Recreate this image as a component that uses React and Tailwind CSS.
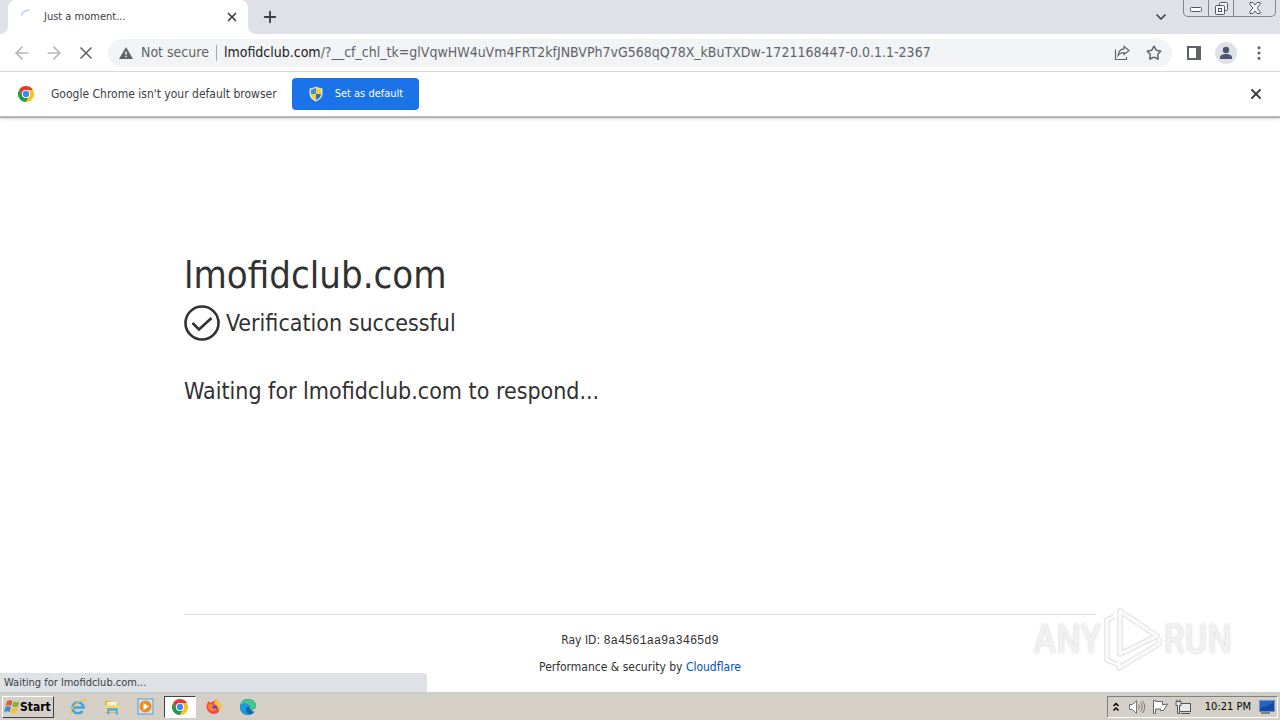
import React from 'react';
import { ArrowLeft, ArrowRight, ChevronDown, Plus, X, Star, MoreVertical } from 'lucide-react';

const ChromeLogo = ({ className }) => (
    <svg viewBox="0 0 48 48" className={className} aria-hidden="true">
        <path d="M24 0a24 24 0 0 1 20.8 12H24A12 12 0 0 0 13.6 30L3.2 12A24 24 0 0 1 24 0z" fill="#e33b2e" />
        <path d="M3.2 12 13.6 30A12 12 0 0 0 34.4 30L24 48A24 24 0 0 1 3.2 12z" fill="#229a4c" />
        <path d="M44.8 12A24 24 0 0 1 24 48L34.4 30A12 12 0 0 0 24 12z" fill="#fbc116" />
        <circle cx="24" cy="24" r="12" fill="#fff" />
        <circle cx="24" cy="24" r="9.5" fill="#4285f4" />
    </svg>
);

const ShieldIcon = () => (
    <svg viewBox="0 0 16 16" className="w-4 h-4" aria-hidden="true">
        <path d="M8 .5 10 1.500 14.500 2.500v5c0 4-3 6.500-6.500 8-3.500-1.500-6.500-4-6.500-8v-5L6 1.500z" fill="#e9e3c4" />
        <path d="M8 2v6H3V3.400z" fill="#3f8fe0" />
        <path d="M8 2v6h5V3.400z" fill="#ffcf2e" />
        <path d="M3 8h5v6C5.200 12.700 3.300 11 3 8z" fill="#ffcf2e" />
        <path d="M13 8H8v6c2.800-1.300 4.700-3 5-6z" fill="#2a6fc4" />
    </svg>
);

const WindowControls = () => (
    <div className="flex h-[17px] mr-1 border border-t-0 border-[#80858e] rounded-b-[5px] text-[#50555e]">
        <button aria-label="Minimize" className="w-6 flex items-center justify-center">
            <svg viewBox="0 0 12 12" className="w-3 h-3"><rect x=".5" y="5.500" width="11" height="4" rx="1" fill="#fff" stroke="currentColor" /></svg>
        </button>
        <button aria-label="Restore" className="w-[26px] flex items-center justify-center border-x border-[#80858e]">
            <svg viewBox="0 0 13 13" className="w-[13px] h-[13px]" fill="#f4f6f8" stroke="currentColor">
                <rect x="4.500" y=".5" width="8" height="8" rx="1" />
                <rect x=".5" y="3.500" width="9" height="9" rx="1" />
                <rect x="3.500" y="6.500" width="3" height="3" />
            </svg>
        </button>
        <button aria-label="Close window" className="w-[41px] flex items-center justify-center">
            <svg viewBox="0 0 12 12" className="w-3 h-3">
                <path d="M1 .5h3L6 3 8 .5h3v2L8.200 6 11 9.500v2H8L6 9l-2 2.500H1v-2L3.800 6 1 2.500z" fill="#fff" stroke="currentColor" />
            </svg>
        </button>
    </div>
);

const TabStrip = () => (
    <header className="flex h-[34px] bg-[#dee1e8]">
        <div className="w-2 bg-white"><div className="h-full bg-[#dee1e8] rounded-br-lg" /></div>
        <div className="flex items-center w-60 pl-3 pr-2 bg-white rounded-t-lg text-[11px] text-[#3c4043]">
            <svg viewBox="0 0 16 16" className="w-4 h-4 mr-2" fill="none" stroke="#b9cdf3" strokeWidth="1.500" aria-hidden="true">
                <path d="M1.500 6.500A7 7 0 0 1 9.500 1.300" />
            </svg>
            <span className="flex-1">Just a moment...</span>
            <button aria-label="Close tab" className="w-4 h-4 flex items-center justify-center"><X className="w-3.5 h-3.5" strokeWidth={3} /></button>
        </div>
        <div className="w-2 bg-white"><div className="h-full bg-[#dee1e8] rounded-bl-lg" /></div>
        <button aria-label="New tab" className="w-7 flex items-center justify-center text-[#3c4043]"><Plus className="w-[18px] h-[18px]" strokeWidth={2.5} /></button>
        <div className="flex-1" />
        <button aria-label="Search tabs" className="w-8 mr-1.5 flex items-center justify-center text-[#3c4043]"><ChevronDown className="w-4 h-4" strokeWidth={2.5} /></button>
        <WindowControls />
    </header>
);

const Toolbar = () => (
    <nav className="flex items-center h-[38px] px-3 border-b border-[#d5d7da] bg-white text-[#5f6368]">
        <button aria-label="Back" className="w-5 mr-3 flex justify-center text-[#b5b7ba]"><ArrowLeft className="w-5 h-5" /></button>
        <button aria-label="Forward" className="w-5 mr-3 flex justify-center text-[#b5b7ba]"><ArrowRight className="w-5 h-5" /></button>
        <button aria-label="Stop" className="w-5 mr-3 flex justify-center"><X className="w-5 h-5" strokeWidth={2} /></button>
        <div className="flex flex-1 items-center h-7 pl-[11px] pr-2.5 bg-[#f1f3f4] rounded-full text-[14px]">
            <svg viewBox="0 0 14 12" className="w-3.5 h-3.5 mr-2" aria-hidden="true">
                <path d="M7 0 14 12H0z" fill="#5f6368" />
                <path d="M6.300 4.500h1.400v3.200H6.300zM6.300 8.800h1.400v1.400H6.300z" fill="#fff" />
            </svg>
            <span>Not secure</span>
            <span className="w-px h-4 mx-[7px] bg-[#a5a8ac]" />
            <span className="flex-1 whitespace-nowrap">
                <span className="text-[#202124]">lmofidclub.com</span>/?__cf_chl_tk=glVqwHW4uVm4FRT2kfJNBVPh7vG568qQ78X_kBuTXDw-1721168447-0.0.1.1-2367
            </span>
            <button aria-label="Share" className="mr-4">
                <svg viewBox="0 0 16 16" className="w-4 h-4" fill="none" stroke="currentColor" strokeWidth="1.200">
                    <path d="M1.500 4.500v10h11V12" />
                    <path d="M10 1.500 15 5.500 10 9.500V7.500C7 7.500 5.500 8.500 4 10.500 4.500 6.500 6.500 4 10 3.800z" />
                </svg>
            </button>
            <button aria-label="Bookmark this tab"><Star className="w-4 h-4" strokeWidth={2.2} /></button>
        </div>
        <button aria-label="Side panel" className="ml-3.5">
            <svg viewBox="0 0 16 16" className="w-4 h-4"><path d="M1 1h14v14H1zM3 3v10h7V3z" fill="#5f6368" fillRule="evenodd" /></svg>
        </button>
        <button aria-label="Profile" className="ml-[13px]">
            <svg viewBox="0 0 22 22" className="w-[22px] h-[22px]">
                <circle cx="11" cy="11" r="11" fill="#dee1e6" />
                <circle cx="11" cy="8" r="3.200" fill="#4b5775" />
                <path d="M5 17v-1.500C5 13 8 12 11 12s6 1 6 3.500V17z" fill="#4b5775" />
            </svg>
        </button>
        <button aria-label="Menu" className="ml-[13px]"><MoreVertical className="w-[18px] h-[18px]" strokeWidth={2.2} /></button>
    </nav>
);

const DefaultBrowserBar = () => (
    <div className="relative z-10 flex items-center h-[44px] pl-[18px] pr-4 bg-white shadow-[0_1px_0_#b8b8b8,0_2px_1px_#b0b0b0,0_3px_3px_#dedede] text-[#3c4043]">
        <ChromeLogo className="w-4 h-4 mr-[17px]" />
        <span className="mr-[15px] text-[12px]">Google Chrome isn't your default browser</span>
        <button className="flex items-center h-8 px-4 rounded bg-[#1a73e8] text-white text-[11px]">
            <ShieldIcon />
            <span className="ml-[11px]">Set as default</span>
        </button>
        <div className="flex-1" />
        <button aria-label="Dismiss"><X className="w-4 h-4" strokeWidth={2.8} /></button>
    </div>
);

const Watermark = () => (
    <div className="absolute right-12 bottom-5 flex items-center text-[40px] leading-[64px] text-[#f1f1f1] font-['Roboto_Condensed','Roboto',sans-serif] [text-shadow:0_0_3px_#cfcfcf]">
        <span>ANY</span>
        <svg viewBox="0 0 60 64" className="w-[60px] h-16" fill="none" strokeLinejoin="round" aria-hidden="true">
            <g stroke="#dfdfdf" strokeWidth="5.500">
                <path d="M18 3v43L55 28z" />
                <path d="M12 9 5 12v40l12 5M17 54v6l40-24v-6" />
            </g>
            <g stroke="#fafafa" strokeWidth="3.500">
                <path d="M18 3v43L55 28z" />
                <path d="M12 9 5 12v40l12 5M17 54v6l40-24v-6" />
            </g>
        </svg>
        <span className="ml-0.5">RUN</span>
    </div>
);

const ChallengePage = () => (
    <div className="relative flex flex-1 flex-col bg-white text-[#313131]">
        <main className="flex-1 w-full max-w-[960px] mx-auto px-6 pt-[129px]">
            <h1 className="text-[38px] leading-[60px]">lmofidclub.com</h1>
            <div className="flex items-center h-9 text-[23px] leading-9">
                <svg viewBox="0 0 36 36" className="w-9 h-9 mr-1.5" fill="none" stroke="#313131" aria-hidden="true">
                    <circle cx="18" cy="18" r="16.500" strokeWidth="2.600" />
                    <path d="m8.500 18 6.500 6.500L27.500 13" strokeWidth="2.600" />
                </svg>
                <h2>Verification successful</h2>
            </div>
            <p className="mt-8 text-[23px] leading-9">Waiting for lmofidclub.com to respond...</p>
        </main>
        <footer className="w-full max-w-[960px] mx-auto px-6 text-[12px] leading-[18px] text-center">
            <div className="flex flex-col gap-2 pt-4 pb-4 border-t border-[#d9d9d9]">
                <p>Ray ID: <code className="font-['Liberation_Mono',monospace] text-[12px]">8a4561aa9a3465d9</code></p>
                <p>Performance &amp; security by <a href="https://www.cloudflare.com" className="text-[#0051c3]">Cloudflare</a></p>
            </div>
        </footer>
        <div className="absolute left-0 bottom-0 w-1/3 h-[19px] pl-1 rounded-tr bg-[#dee1e6] text-[11px] leading-[19px] text-[#3c4043]">
            Waiting for lmofidclub.com...
        </div>
        <Watermark />
    </div>
);

const StartFlag = () => (
    <svg viewBox="0 0 16 16" className="w-4 h-4" aria-hidden="true">
        <path d="M3 2c2-1 3.500-1 5.500.2L7.200 7C5.300 6 3.800 6 1.700 7z" fill="#e8592b" />
        <path d="M9.500 2.600c2 1 3.500 1 5.800 0L14 7.500c-2.200 1-3.800.8-5.800 0z" fill="#7fb441" />
        <path d="M1.400 8C3.500 7 5 7 7 8l-1.300 5C3.800 12 2.200 12 0 13z" fill="#3f8ad6" />
        <path d="M8 8.600c2 1 3.500 1 5.700 0l-1.300 5c-2.200 1-3.700.8-5.700-.2z" fill="#f5c22c" />
    </svg>
);

const ExplorerE = () => (
    <svg viewBox="0 0 18 18" className="w-[18px] h-[18px]" fill="none" aria-hidden="true">
        <path d="M5 9.500h9.500A5.500 5.500 0 1 0 13.500 13" stroke="#3aa5e4" strokeWidth="2.600" />
        <path d="M2 16.500C.5 13 5 6 11 3s6-1.500 5 1" stroke="#edc14a" strokeWidth="1.300" />
    </svg>
);

const FolderIcon = () => (
    <svg viewBox="0 0 18 18" className="w-[18px] h-[18px]" aria-hidden="true">
        <path d="M2 3h5l1 2h7v10H2z" fill="#dcb84c" />
        <path d="M4 4h10v5H4z" fill="#fff5c9" />
        <path d="M2 7h14v7H2z" fill="#f3d978" />
        <path d="M4 16.500V10h11v6.500h-2.500V13h-6v3.500z" fill="#63b0dc" />
    </svg>
);

const PlayerIcon = () => (
    <svg viewBox="0 0 18 18" className="w-[18px] h-[18px]" aria-hidden="true">
        <rect x="1" y="1" width="15" height="15" fill="#cfe4f5" stroke="#5c9bce" />
        <circle cx="8.500" cy="8.500" r="6" fill="#f28a1c" />
        <path d="m6.500 5 5.500 3.500L6.500 12z" fill="#fff" />
    </svg>
);

const FirefoxIcon = () => (
    <svg viewBox="0 0 18 18" className="w-[18px] h-[18px]" aria-hidden="true">
        <path d="M10 2.500c.5-1 1-1.500 1.500-1.500 0 2 4.500 3.500 4.500 8.500a7.300 7.300 0 0 1-14.500 0C1.500 7 2.500 4.500 3.500 3l1.300 2z" fill="#f9483f" />
        <path d="M11.500 1c0 2 4.500 3.500 4.500 8.500 0 2-1 4-2 5 0-4-1-6-5-8 0-2 1-4 2.500-5.500z" fill="#ffc52e" />
        <circle cx="9" cy="9.800" r="3.300" fill="#8b3fc4" />
        <path d="M3 7c2-1.500 4-1 6 .5L6.500 9c1 2 3 2 5 1.500-1 4-8 4-8.500-3.500z" fill="#ff8a22" />
    </svg>
);

const EdgeIcon = () => (
    <svg viewBox="0 0 18 18" className="w-[18px] h-[18px]" aria-hidden="true">
        <path d="M1 9C1 4.500 4.500 1 9 1s8 3 8 7c0 2.500-2 4-4.500 3.500C13 14 15 14 16 13c-1.500 2.500-4 4-7 4-4.500 0-8-3.500-8-8z" fill="#1464b8" />
        <path d="M1.200 7.500C2.500-.5 15-1 17 7c.5 3-1.800 4.800-4.800 4.500-1.700-.2-2.200-1-1.400-2C11 6.500 5 4 1.200 7.500z" fill="#42c78b" />
        <path d="M1.200 7.500C5 4 10.500 5.500 10.500 9 8 8 6.500 10 7 12.500c.6 2 2 3.500 4 4.200C5 18 0 13 1.200 7.500z" fill="#2198d9" />
    </svg>
);

const APPS = [
    { name: 'Internet Explorer', icon: ExplorerE },
    { name: 'File Explorer', icon: FolderIcon },
    { name: 'Media Player', icon: PlayerIcon },
    { name: 'Google Chrome', icon: () => <ChromeLogo className="w-4 h-4" />, active: true },
    { name: 'Firefox', icon: FirefoxIcon },
    { name: 'Edge', icon: EdgeIcon },
];

const Tray = () => (
    <div className="flex items-center h-[22px] pl-1 pr-0.5 border border-t-[#808080] border-l-[#808080] border-b-white border-r-white">
        <svg viewBox="0 0 8 10" className="w-2 h-2.5 mr-2" fill="none" stroke="#000" strokeWidth="1.500" aria-hidden="true"><path d="M1.500 4 4 1.500 6.500 4M1.500 8.500 4 6l2.500 2.500" /></svg>
        <svg viewBox="0 0 18 16" className="w-[18px] h-4 mr-1.5" fill="none" stroke="#777" aria-hidden="true">
            <path d="M1.500 5.500h3l4-4v13l-4-4h-3z" fill="#fff" />
            <path d="M10.500 5.500q2 2.500 0 5M12.500 3.500q3.500 4.500 0 9M14.500 2q4.500 6 0 12" />
        </svg>
        <svg viewBox="0 0 17 16" className="w-[17px] h-4 mr-1.5" fill="#fff" stroke="#666" aria-hidden="true">
            <path d="M1.500 1.500v13h2V10h5v1.500h3l4-6.500-5 1V2.500h-7v-1z" />
        </svg>
        <svg viewBox="0 0 16 16" className="w-4 h-4 mr-3.5" fill="#e8e8e8" stroke="#555" aria-hidden="true">
            <rect x="4.500" y="4.500" width="11" height="8" />
            <path d="M6 14.500h9" />
            <path d="M1 2.500h5v4H4.500v8h-2v-8H1zM2 .5v2M5 .5v2" />
        </svg>
        <span className="mr-2 text-[11px] text-black">10:21 PM</span>
        <svg viewBox="0 0 16 14" className="w-4 h-3.5" aria-hidden="true">
            <rect x=".5" y=".5" width="15" height="11" fill="#2565c0" stroke="#6b94cc" />
            <path d="M1 8Q9 7 15 1v10H1z" fill="#1749a0" />
            <path d="M2 13h9" stroke="#333" />
        </svg>
    </div>
);

const Taskbar = () => (
    <div className="flex items-center h-7 px-0.5 border-t-2 border-[#c9cfcc] bg-[#d4d0c8]">
        <button className="flex items-center h-[22px] px-px mr-2 border border-t-white border-l-white border-b-[#404040] border-r-[#404040] text-[12px] font-bold text-black">
            <StartFlag />
            <span className="mr-px">Start</span>
        </button>
        <div className="flex gap-0.5">
            {APPS.map((app) => (
                <button
                    key={app.name}
                    aria-label={app.name}
                    className={`flex items-center justify-center w-8 h-[22px] ${app.active ? 'bg-white border border-t-[#404040] border-l-[#404040] border-b-white border-r-white' : ''}`}
                >
                    <app.icon />
                </button>
            ))}
        </div>
        <div className="flex-1" />
        <Tray />
    </div>
);

const App = () => {
    return (
        <div className="flex flex-col min-h-screen overflow-hidden font-['Tahoma','DejaVu_Sans_Condensed','DejaVu_Sans',sans-serif]">
            <TabStrip />
            <Toolbar />
            <DefaultBrowserBar />
            <ChallengePage />
            <Taskbar />
        </div>
    );
};

export default App;
